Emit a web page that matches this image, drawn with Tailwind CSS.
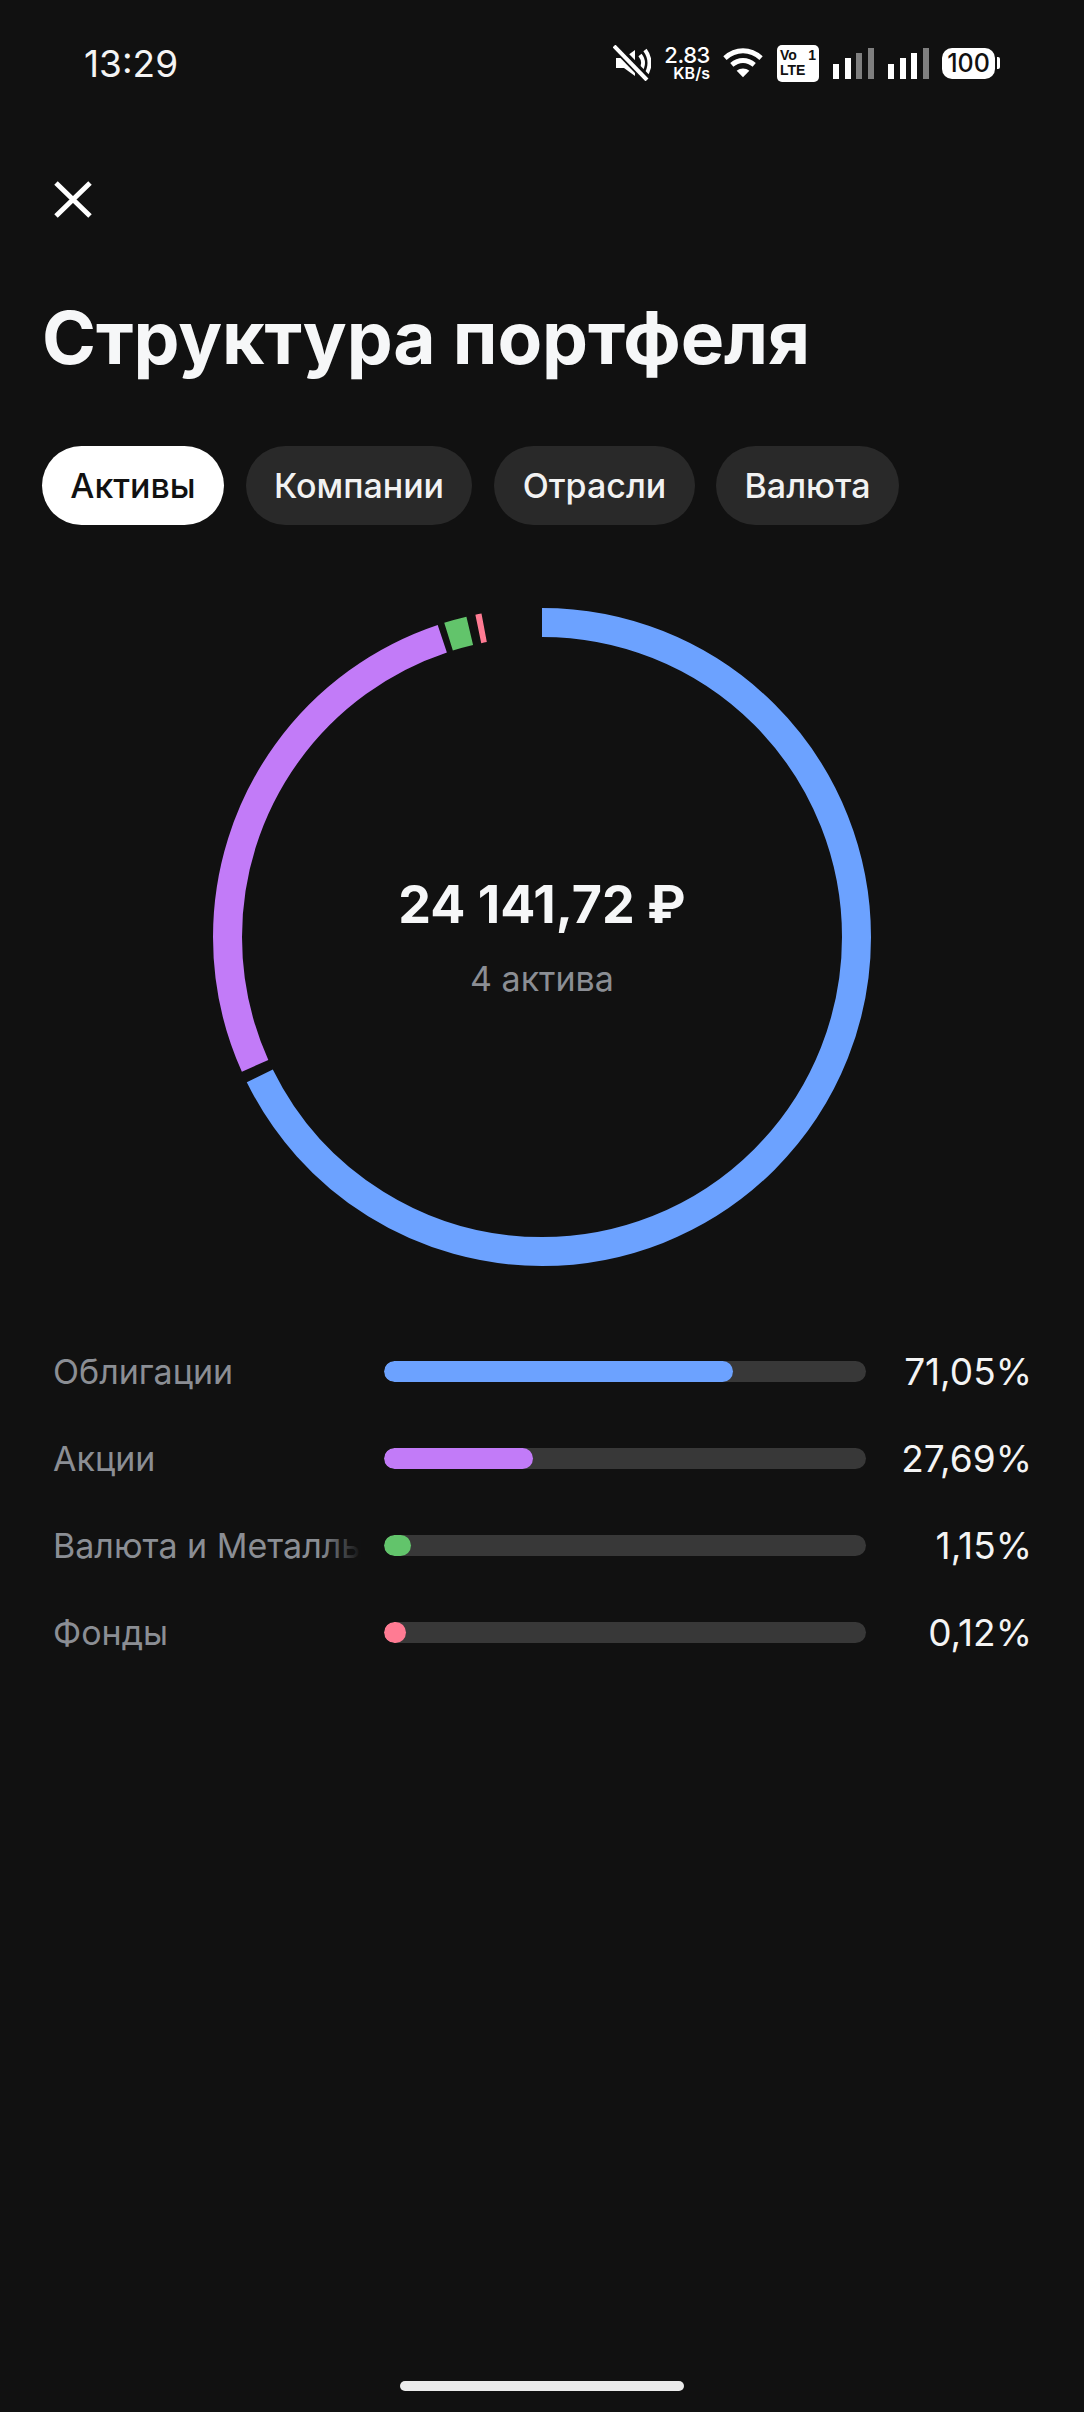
<!DOCTYPE html>
<html lang="ru">

<head>
  <meta charset="UTF-8">
  <meta name="viewport" content="width=device-width, initial-scale=1.0">
  <title>Структура портфеля</title>
  <script src="https://cdn.jsdelivr.net/npm/@tailwindcss/browser@4"></script>
</head>

<body class="bg-[#111111] text-white font-['Inter',sans-serif]">
  <main class="w-[1084px] h-[2412px] flex flex-col overflow-hidden">

    <!-- Status bar -->
    <div class="h-[126px] shrink-0 flex items-center pl-[84px]">
      <span class="w-[529px] text-[37px] leading-none text-[#f4f4f4]">13:29</span>
      <div class="flex items-center">
        <svg class="w-[38px] h-[36px]" viewBox="0 0 38 36" fill="none">
          <path d="M3 13h8l11-8v26l-11-8H3z" fill="#fff" />
          <path d="M27 10c4 5 4 11 0 16M32 5c6 8 6 18 0 26" stroke="#fff" stroke-width="4" />
          <path d="M3 2l32 33" stroke="#111111" stroke-width="9" />
          <path d="M1 1l33 34" stroke="#fff" stroke-width="4" />
        </svg>
        <div class="ml-[15px] w-[44px] flex flex-col items-end gap-[2px] font-medium">
          <span class="text-[22px] leading-[18px] tracking-[-0.4px]">2.83</span>
          <span class="text-[16px] leading-[14px] font-semibold">KB/s</span>
        </div>
        <svg class="ml-[13px] w-[40px] h-[30px]" viewBox="0 0 41 30" fill="none">
          <path d="M2 10c11-10 26-10 37 0" stroke="#fff" stroke-width="5" />
          <path d="M9 17c7-6 16-6 23 0" stroke="#fff" stroke-width="5" />
          <path d="M14 23c4-3 9-3 13 0l-6.500 6.500z" fill="#fff" />
        </svg>
        <div class="ml-[14px] w-[42px] h-[37px] bg-white rounded-[5px] text-[#111111] font-semibold text-[14px] leading-[15px] px-[3px] py-[3px] font-['Liberation_Sans',sans-serif]">
          <div class="flex justify-between"><span>Vo</span><span>1</span></div>
          <div>LTE</div>
        </div>
        <div class="ml-[14px] h-[31px] flex items-end gap-[5.5px]">
          <div class="w-[6px] h-[15px] bg-white"></div>
          <div class="w-[6px] h-[21px] bg-white"></div>
          <div class="w-[6px] h-[26px] bg-[#7f7f7f]"></div>
          <div class="w-[6px] h-[31px] bg-[#7f7f7f]"></div>
        </div>
        <div class="ml-[14.5px] h-[31px] flex items-end gap-[5.5px]">
          <div class="w-[6px] h-[15px] bg-white"></div>
          <div class="w-[6px] h-[21px] bg-white"></div>
          <div class="w-[6px] h-[26px] bg-white"></div>
          <div class="w-[6px] h-[31px] bg-[#7f7f7f]"></div>
        </div>
        <div class="ml-[13.5px] flex items-center">
          <div class="w-[53px] h-[31px] bg-white rounded-[10px] flex items-center justify-center text-[#111111] text-[25px] leading-none font-medium">100</div>
          <div class="ml-[2px] w-[3px] h-[12px] bg-white rounded-r-[2px]"></div>
        </div>
      </div>
    </div>

    <!-- Close -->
    <button class="ml-[54px] mt-[55px] w-[38px] h-[37px] shrink-0">
      <svg class="w-full h-full" viewBox="0 0 38 37" fill="none">
        <path d="M2 2l34 33M36 2L2 35" stroke="#fff" stroke-width="5" />
      </svg>
    </button>

    <h1 class="ml-[42px] mt-[80px] h-[80px] shrink-0 text-[73px] leading-[80px] font-bold tracking-[-0.1px] whitespace-nowrap text-[#f6f7f8]">Структура портфеля</h1>

    <!-- Tabs -->
    <div class="ml-[42px] mt-[68px] flex gap-[22px] shrink-0 text-[34px] font-medium">
      <button class="h-[79px] w-[182px] rounded-full bg-white text-[#111111]">Активы</button>
      <button class="h-[79px] w-[226px] rounded-full bg-[#292929] text-[#f2f2f2]">Компании</button>
      <button class="h-[79px] w-[201px] rounded-full bg-[#292929] text-[#f2f2f2]">Отрасли</button>
      <button class="h-[79px] w-[183px] -ml-[1px] rounded-full bg-[#292929] text-[#f2f2f2]">Валюта</button>
    </div>

    <!-- Donut -->
    <div class="mt-[83px] flex justify-center shrink-0">
      <div class="relative w-[658px] h-[658px]">
        <svg class="w-full h-full -rotate-90" viewBox="0 0 658 658" fill="none" stroke-width="29">
          <circle cx="329" cy="329" r="314.500" pathLength="360" stroke="#6ca2ff" stroke-dasharray="243.800 116.200" />
          <circle cx="329" cy="329" r="314.500" pathLength="360" stroke="#c27bf8" stroke-dasharray="95.700 264.300" stroke-dashoffset="-245.800" />
          <circle cx="329" cy="329" r="314.500" pathLength="360" stroke="#62c46b" stroke-dasharray="4 356" stroke-dashoffset="-342.700" />
          <circle cx="329" cy="329" r="314.500" pathLength="360" stroke="#ff7b93" stroke-dasharray="1.100 358.900" stroke-dashoffset="-348.300" />
        </svg>
        <div class="absolute inset-0 flex flex-col items-center justify-center">
          <div class="text-[52px] leading-[60px] font-bold text-[#f6f7f8]">24 141,72 ₽</div>
          <div class="mt-[24px] text-[34px] leading-[40px] text-[#8b8e94]">4 актива</div>
        </div>
      </div>
    </div>

    <!-- Rows -->
    <div class="mt-[62px] pl-[53px] pr-[52px] flex flex-col shrink-0">
      <div class="h-[87px] flex items-center">
        <div class="w-[331px] shrink-0 whitespace-nowrap text-[34px] text-[#8b8e94]">Облигации</div>
        <div class="w-[482px] h-[21px] rounded-full bg-[#383838] overflow-hidden">
          <div class="w-[349px] h-full rounded-full bg-[#6ca2ff]"></div>
        </div>
        <div class="flex-1 text-right text-[37px] text-[#f4f4f4]">71,05%</div>
      </div>
      <div class="h-[87px] flex items-center">
        <div class="w-[331px] shrink-0 whitespace-nowrap text-[34px] text-[#8b8e94]">Акции</div>
        <div class="w-[482px] h-[21px] rounded-full bg-[#383838] overflow-hidden">
          <div class="w-[149px] h-full rounded-full bg-[#c27bf8]"></div>
        </div>
        <div class="flex-1 text-right text-[37px] text-[#f4f4f4]">27,69%</div>
      </div>
      <div class="h-[87px] flex items-center">
        <div class="relative w-[308px] mr-[23px] shrink-0 overflow-hidden whitespace-nowrap text-[34px] text-[#8b8e94]">
          Валюта и Металлы
          <div class="absolute inset-y-0 right-0 w-[40px] bg-linear-to-l from-[#111111] to-transparent"></div>
        </div>
        <div class="w-[482px] h-[21px] rounded-full bg-[#383838] overflow-hidden">
          <div class="w-[27px] h-full rounded-full bg-[#62c46b]"></div>
        </div>
        <div class="flex-1 text-right text-[37px] text-[#f4f4f4]">1,15%</div>
      </div>
      <div class="h-[87px] flex items-center">
        <div class="w-[331px] shrink-0 whitespace-nowrap text-[34px] text-[#8b8e94]">Фонды</div>
        <div class="w-[482px] h-[21px] rounded-full bg-[#383838] overflow-hidden">
          <div class="w-[22px] h-full rounded-full bg-[#ff7b93]"></div>
        </div>
        <div class="flex-1 text-right text-[37px] text-[#f4f4f4]">0,12%</div>
      </div>
    </div>

    <!-- Home indicator -->
    <div class="mt-auto mb-[21px] mx-auto w-[284px] h-[10px] rounded-full bg-[#ebebeb] shrink-0"></div>
  </main>
</body>
</html>
